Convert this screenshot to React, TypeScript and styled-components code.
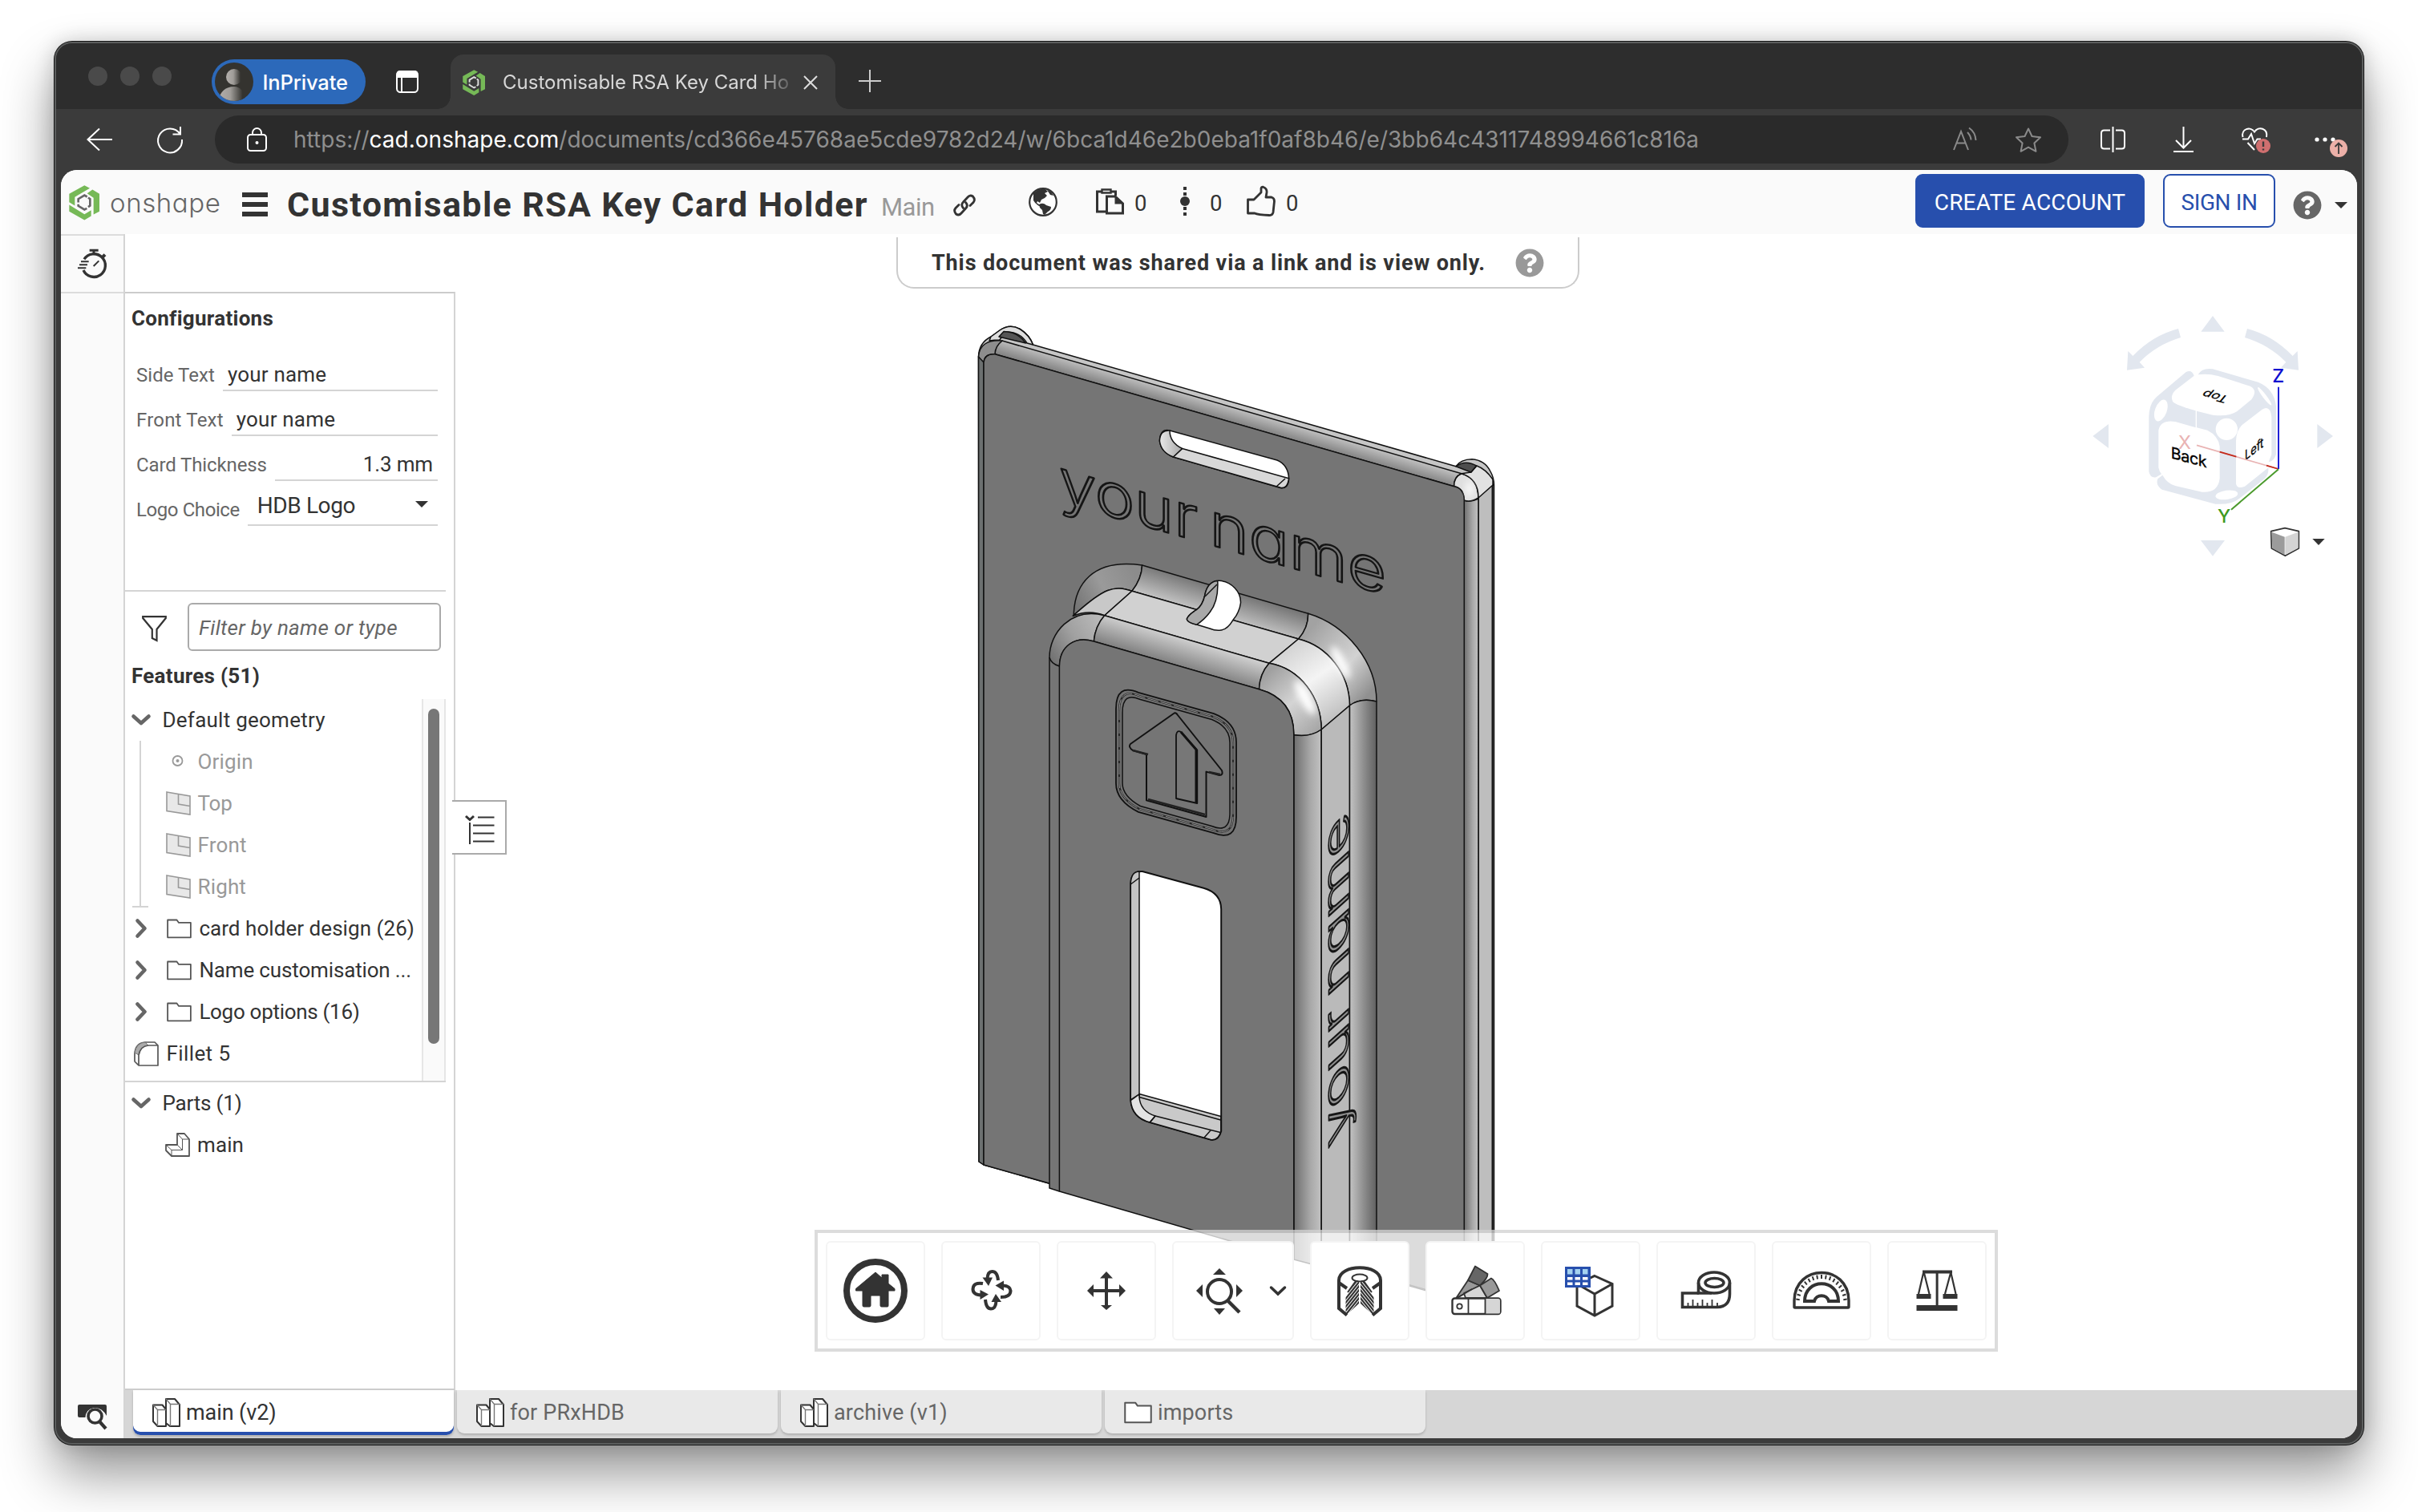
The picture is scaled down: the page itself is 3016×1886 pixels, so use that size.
import React from 'react';
import styled, { createGlobalStyle, css } from 'styled-components';
import { FaQuestionCircle } from 'react-icons/fa';

const GlobalStyle = createGlobalStyle`
  * { box-sizing: border-box; }
  body { margin: 0; background: #fff; overflow: hidden; }
  svg { display: block; overflow: visible; }
`;

const ui = '"Inter", "Liberation Sans", sans-serif';
const site = 'Roboto, "Open Sans", sans-serif';
const ink = '#333';
const line = '#d4d4d4';
const blue = '#274fad';

/* ---------- browser frame ---------- */

const Desktop = styled.div`
  width: 3016px;
  height: 1886px;
  padding: 52px 68px;
  background: #fff;
`;

const Window = styled.div`
  display: flex;
  flex-direction: column;
  width: 2880px;
  height: 1750px;
  border: 2px solid #5b5d5d;
  border-radius: 22px;
  background: #3b3b3b;
  box-shadow: 0 0 0 1px #161616, 0 36px 66px rgba(0, 0, 0, 0.42), 0 0 26px rgba(0, 0, 0, 0.18);
`;

const TabStrip = styled.div`
  display: flex;
  align-items: flex-start;
  flex: 0 0 82px;
  padding-left: 40px;
  border-radius: 20px 20px 0 0;
  background: #2d2d2d;
`;

const Lights = styled.div`
  display: flex;
  gap: 16px;
  margin-top: 29px;
`;

const Light = styled.span`
  width: 24px;
  height: 24px;
  border-radius: 50%;
  background: #4a4a4a;
`;

const Profile = styled.div`
  display: flex;
  align-items: center;
  gap: 11.5px;
  width: 192px;
  height: 56px;
  margin: 20px 0 0 50px;
  padding-left: 4px;
  border-radius: 28px;
  background: #2c69ba;
  color: #fff;
  font: 500 25.5px ${ui};
  letter-spacing: -0.15px;
`;

const StripIcon = styled.div<{ $top: number; $left: number }>`
  margin: ${p => p.$top}px 0 0 ${p => p.$left}px;
`;

const BrowserTab = styled.div`
  position: relative;
  display: flex;
  align-items: center;
  width: 480px;
  height: 68px;
  margin: 14px 0 0 40px;
  padding: 2px 22px 0 15px;
  border-radius: 16px 16px 0 0;
  background: #3b3b3b;
  &::before, &::after {
    content: '';
    position: absolute;
    bottom: 0;
    width: 16px;
    height: 16px;
  }
  &::before {
    left: -16px;
    background: radial-gradient(circle at 0 0, transparent 15.5px, #3b3b3b 16px);
  }
  &::after {
    right: -16px;
    background: radial-gradient(circle at 100% 0, transparent 15.5px, #3b3b3b 16px);
  }
`;

const TabTitle = styled.span`
  flex: none;
  margin: 0 auto 0 22px;
  white-space: nowrap;
  font: 400 24px/40px ${ui};
  color: #d8d8d8;
  -webkit-mask-image: linear-gradient(90deg, #000 88%, rgba(0, 0, 0, 0.25) 100%);
  mask-image: linear-gradient(90deg, #000 88%, rgba(0, 0, 0, 0.25) 100%);
`;

const Toolbar = styled.div`
  display: flex;
  align-items: center;
  flex: 0 0 76px;
  padding-left: 38px;
`;

const AddressBar = styled.div`
  display: flex;
  align-items: center;
  width: 2312px;
  height: 60px;
  margin: 0 40px;
  padding: 0 34px 0 40px;
  border-radius: 30px;
  background: #2a2a2a;
`;

const Url = styled.span`
  flex: 1;
  margin-left: 33px;
  white-space: nowrap;
  font: 400 28px/60px ${ui};
  letter-spacing: 0.02px;
  color: #8f8f8f;
`;

const Host = styled.span`
  color: #fff;
`;

const Gap = styled.span<{ $w: number }>`
  flex: 0 0 ${p => p.$w}px;
`;

/* ---------- page ---------- */

const Page = styled.div`
  display: flex;
  flex-direction: column;
  flex: 1;
  min-height: 0;
  margin: 0 6px 6px;
  border-radius: 20px;
  overflow: hidden;
  background: #fff;
  font-family: ${site};
  color: ${ink};
`;

const Header = styled.header`
  display: flex;
  align-items: flex-start;
  flex: 0 0 80px;
  padding: 0 12px 0 10px;
  background: #fafafa;
`;

const Slot = styled.div<{ $ml?: number; $mt: number; $w?: number }>`
  flex: none;
  margin: ${p => p.$mt}px 0 0 ${p => p.$ml ?? 0}px;
  ${p => p.$w && css`width: ${p.$w}px;`}
`;

const Wordmark = styled.span`
  font: 300 33px/60px ${ui};
  font-feature-settings: 'cv11';
  letter-spacing: 0.6px;
  color: #666;
`;

const DocTitle = styled.h1`
  margin: 0;
  white-space: nowrap;
  font: 700 43px/60px ${site};
  letter-spacing: 1.34px;
`;

const Branch = styled.span`
  font: 400 31px/60px ${site};
  letter-spacing: -0.5px;
  color: #999;
`;

const Count = styled.span`
  font: 400 27.5px/60px ${site};
`;

const HeaderButton = styled.button<{ $primary?: boolean; $w: number }>`
  width: ${p => p.$w}px;
  height: 67px;
  padding: 3px 1px 0 0;
  border: 2px solid ${blue};
  border-radius: 9px;
  background: ${p => (p.$primary ? blue : '#fff')};
  color: ${p => (p.$primary ? '#fff' : blue)};
  font: 400 28px ${site};
  letter-spacing: ${p => (p.$primary ? 0.2 : -0.4)}px;
`;

const Body = styled.div`
  display: flex;
  flex: 1;
  min-height: 0;
`;

const Rail = styled.aside`
  display: flex;
  flex-direction: column;
  justify-content: space-between;
  flex: 0 0 80px;
  border-right: 2px solid ${line};
  background: #fafafa;
`;

const RailCell = styled.div`
  height: 74px;
  padding: 17px 0 0 21px;
  border: solid #dcdcdc;
  border-width: 2px 0;
`;

const RailFoot = styled.div`
  padding: 0 0 11px 21px;
`;

const Main = styled.main`
  display: flex;
  flex-direction: column;
  flex: 1;
`;

const Workspace = styled.div`
  display: flex;
  flex: 1;
`;

const Panel = styled.section`
  position: relative;
  display: flex;
  flex-direction: column;
  flex: 0 0 412px;
  margin-top: 72px;
  border: 2px solid #ccc;
  border-left: 0;
  border-right-color: ${line};
`;

const PanelHeading = styled.h2<{ $h: number }>`
  margin: 0;
  padding-left: 8px;
  font: 700 26px/${p => p.$h}px ${site};
  letter-spacing: 0.28px;
`;

const ConfigRow = styled.label`
  display: flex;
  align-items: flex-end;
  gap: 10px;
  height: 56px;
  padding: 0 20px 0 14px;
`;

const ConfigName = styled.span<{ $track: number }>`
  font: 400 24px/40px ${site};
  letter-spacing: ${p => p.$track}px;
  color: #666;
`;

const ConfigValue = styled.span<{ $right?: boolean }>`
  flex: 1;
  padding: 0 6px;
  border-bottom: 2px solid ${line};
  font: 400 26px/38px ${site};
  letter-spacing: ${p => (p.$right ? -0.15 : 0.2)}px;
  text-align: ${p => (p.$right ? 'right' : 'left')};
`;

const ConfigSelect = styled(ConfigValue)`
  display: flex;
  justify-content: space-between;
  padding: 0 12px;
  font-size: 28px;
  line-height: 47px;
  letter-spacing: -0.4px;
`;

const Divider = styled.div`
  flex: 0 0 2px;
  width: 400px;
  background: ${line};
`;

const FilterRow = styled.div`
  display: flex;
  align-items: center;
  height: 60px;
  margin: 14px 0 2px;
  padding-left: 21px;
`;

const FunnelBox = styled.div`
  padding: 4px 0 0;
`;

const FilterInput = styled.div`
  width: 316px;
  height: 60px;
  margin-left: 26px;
  padding: 0 12px;
  border: 2px solid #aaa;
  border-radius: 6px;
  font: italic 400 26px/59px ${site};
  letter-spacing: 0.28px;
  color: #666;
`;

const TreeArea = styled.div`
  display: flex;
  height: 476px;
`;

const Tree = styled.div`
  flex: 0 0 370px;
`;

const TreeRow = styled.div<{ $pad: number; $gap: number; $dim?: boolean; $track?: number }>`
  display: flex;
  align-items: center;
  gap: ${p => p.$gap}px;
  height: 52px;
  padding-left: ${p => p.$pad}px;
  white-space: nowrap;
  font: 400 26px/52px ${site};
  letter-spacing: ${p => p.$track ?? 0.1}px;
  color: ${p => (p.$dim ? '#999' : ink)};
`;

const Branching = styled.div`
  position: relative;
  margin-left: 18px;
  border-left: 2px solid ${line};
  &::after {
    content: '';
    position: absolute;
    left: -11px;
    bottom: 0;
    width: 20px;
    height: 2px;
    background: ${line};
  }
`;

const ScrollTrack = styled.div`
  flex: 0 0 30px;
  padding: 12px 6px 0;
  border: solid #e6e6e6;
  border-width: 0 2px;
  background: #fafafa;
`;

const ScrollThumb = styled.div`
  width: 14px;
  height: 418px;
  border-radius: 7px;
  background: #777;
`;

const PanelHandle = styled.button`
  position: absolute;
  left: 408px;
  top: 632px;
  width: 68px;
  height: 68px;
  padding: 5px 0 0 16px;
  border: 2px solid #aaa;
  border-left: 0;
  background: #fff;
`;

const Viewport = styled.section`
  position: relative;
  flex: 1;
`;

const Banner = styled.div`
  position: absolute;
  left: 550px;
  top: 4px;
  display: flex;
  align-items: center;
  gap: 37px;
  width: 852px;
  height: 64px;
  padding: 2px 0 0 42px;
  border: 2px solid #ccc;
  border-top: 0;
  border-radius: 0 0 22px 22px;
  background: #fff;
  font: 700 27px ${site};
  letter-spacing: 0.88px;
  white-space: nowrap;
`;

const ModelLayer = styled.div`
  position: absolute;
  left: 632px;
  top: 98px;
`;

const CubeLayer = styled.div`
  position: absolute;
  left: 2012px;
  top: 78px;
`;

const ViewBar = styled.div`
  position: absolute;
  left: 448px;
  top: 1242px;
  display: flex;
  gap: 20px;
  padding: 10px;
  border: 4px solid rgba(0, 0, 0, 0.137);
  background: rgba(255, 255, 255, 0.75);
`;

const ViewButton = styled.button<{ $wide?: boolean }>`
  width: ${p => (p.$wide ? 152 : 124)}px;
  height: 124px;
  padding: 0;
  border: 2px solid #f4f4f4;
  border-radius: 6px;
  background: #fff;
`;

const TabBar = styled.nav`
  display: flex;
  align-items: flex-start;
  gap: 4px;
  flex: 0 0 60px;
  padding-left: 10px;
  background: #d6d6d6;
`;

const DocTab = styled.div<{ $active?: boolean }>`
  display: flex;
  align-items: center;
  gap: 7px;
  width: 400px;
  height: ${p => (p.$active ? 56 : 54)}px;
  padding: ${p => (p.$active ? 0 : 2)}px 0 0 24px;
  border-radius: 0 0 9px 9px;
  background: ${p => (p.$active ? '#fff' : '#e9e9e9')};
  box-shadow: ${p => (p.$active ? `inset 0 -4px 0 ${blue}, 0 2px 3px rgba(0,0,0,.2)` : '0 2px 3px rgba(0,0,0,.18)')};
  font: 400 27px/54px ${site};
  letter-spacing: ${p => (p.$active ? -0.1 : 0.15)}px;
  color: ${p => (p.$active ? ink : '#666')};
`;

/* ---------- small drawings ---------- */

const Logo = ({ w, inner }: { w: number; inner: string }) => (
  <svg width={w} height={w * 1.15} viewBox="2 513 114 130">
    <g fill="#76b957">
      <path d="M3 545 60 513 80 524 24 557V589L3 576Z" />
      <path d="M90 529 116 545V611L94 622V560L70 543Z" />
      <path d="M3 586 60 621 85 606V628L60 643 3 611Z" />
    </g>
    <g fill="none" stroke={inner} strokeWidth="8">
      <path d="M70 556 60 550 37 564V577" />
      <path d="M74 559 81 564V589L74 594" />
      <path d="M37 584V590L60 604 69 599" />
    </g>
  </svg>
);

const Chevron = ({ down }: { down?: boolean }) => (
  <svg width="24" height="24" viewBox="0 0 24 24" fill="none" stroke="#666" strokeWidth="4.6" strokeLinecap="round" strokeLinejoin="round">
    {down ? <path d="M2.5 7.5 12 16 21.5 7.5" /> : <path d="M7.5 2.5 16.5 12 7.5 21.5" />}
  </svg>
);

const Folder = ({ w = 31 }: { w?: number }) => (
  <svg width={w} height={w * 0.8} viewBox="0 0 31 25" fill="#fff" stroke="#555" strokeWidth="1.8" strokeLinejoin="round">
    <path d="M1 23.5V1.5H12.5L15 5H30V23.5Z" />
  </svg>
);

const Plane = () => (
  <svg width="31" height="30" viewBox="0 0 31 30" fill="#e8e8e8" stroke="#999" strokeWidth="1.6">
    <path d="M1 1 30 6V29L1 24.5Z" />
    <path d="M15.5 3.5V16L30 18.5" fill="none" />
  </svg>
);

const Origin = () => (
  <svg width="31" height="30" viewBox="0 0 31 30" fill="none" stroke="#999" strokeWidth="1.8">
    <circle cx="14.5" cy="14" r="6" />
    <circle cx="14.5" cy="14" r="2" fill="#999" stroke="none" />
  </svg>
);

const FilletIcon = () => (
  <svg width="31" height="31" viewBox="0 0 31 31" fill="#fff" stroke="#555" strokeWidth="1.7" strokeLinejoin="round">
    <path d="M6 30 1 25V15Q2 2 14 1H26L30 5V30Z" />
    <path d="M1 14Q3 2 14 1L18 5Q8 6 6 17Z" fill="#aaa" stroke="#777" strokeWidth="1" />
    <path d="M6 30V17Q8 6 18 5H30" fill="none" />
  </svg>
);

const PartIcon = () => (
  <svg width="31" height="30" viewBox="0 0 31 30" fill="#fff" stroke="#555" strokeWidth="1.8" strokeLinejoin="round">
    <path d="M1 15H15V1H24L30 8V29H8L1 22Z" />
    <path d="M1 15 8 21.5H21.5V8H30M15 1 21.5 8M15 15 21.5 21.5M8 21.5V29" fill="none" strokeWidth="1" />
  </svg>
);

const Studio = () => (
  <svg width="35" height="36" viewBox="0 0 35 36" fill="#fff" stroke="#333" strokeWidth="2" strokeLinejoin="round">
    <path d="M1 8.5H12.5L17 14V35H6.5L1 29Z" />
    <path d="M17 1H28L34 8V35H22L17 31Z" />
    <path d="M1 8.5 6.5 14.5V35M6.5 14.5H17M17 1 22.5 7.5V35M22.5 7.5H34" fill="none" stroke="#777" strokeWidth="1.4" />
  </svg>
);

const Caret = ({ w = 16 }: { w?: number }) => (
  <svg width={w} height={w / 2} viewBox="0 0 16 8">
    <path d="M0 0H16L8 8Z" fill={ink} />
  </svg>
);

const Avatar = () => (
  <svg width="48" height="48" viewBox="0 0 48 48">
    <defs>
      <linearGradient id="person" x1="0" x2="1">
        <stop offset="0" stopColor="#b3afab" />
        <stop offset="0.45" stopColor="#a09d99" />
        <stop offset="0.9" stopColor="#34332f" />
      </linearGradient>
      <clipPath id="disc"><circle cx="24" cy="24" r="24" /></clipPath>
    </defs>
    <g clipPath="url(#disc)">
      <rect width="48" height="48" fill="#34332f" />
      <circle cx="24" cy="18" r="10" fill="url(#person)" />
      <path d="M4 48Q8 30 24 30Q36 30 38 48Z" fill="url(#person)" />
    </g>
  </svg>
);

/* ---------- view bar icons ---------- */

const HomeIcon = () => (
  <>
    <circle cx="60" cy="60" r="36" fill="none" stroke={ink} strokeWidth="8" />
    <path d="M60 37 35.5 57.5V60H44V78.5Q44 80 45.5 80H52.5Q54 80 54 78.5V67Q54 66 55 66H65Q66 66 66 67V78.5Q66 80 67.5 80H75Q76 80 76 78.5V60H84V57.5L76 51V40H68V44Z" fill={ink} stroke={ink} strokeLinejoin="round" />
  </>
);

const OrbitIcon = () => (
  <g fill="none" stroke={ink} strokeWidth="4">
    <path d="M69 47Q68 36 61.5 36Q56 36 55.5 45" />
    <path d="M50 51Q38 49 37.5 58Q37.5 65 48 65.5" />
    <path d="M53 71Q54 82.5 60 82.5Q66 82.5 66.5 73" />
    <path d="M72 68Q84.5 68 84.5 60Q84 54 75 53.5" />
    <g fill={ink} stroke="none">
      <path d="M49.5 43.5H62L57 54Z" />
      <path d="M46.5 59V71L57 64.5Z" />
      <path d="M60.5 74H73L66 64Z" />
      <path d="M76 47.5V60L65.5 53.5Z" />
    </g>
  </g>
);

const PanIcon = () => (
  <g fill={ink}>
    <path d="M58 42H62V78H58Z" />
    <path d="M42 58H78V62H42Z" />
    <path d="M60 36 68 44.5H52ZM60 84 53 78H67ZM36 60 44 52V68ZM84 60 76 52V68Z" />
  </g>
);

const FitIcon = () => (
  <g fill={ink}>
    <circle cx="57" cy="61" r="15" fill="none" stroke={ink} strokeWidth="4" />
    <path d="M68 73 82 87" stroke={ink} strokeWidth="4.5" />
    <path d="M57 32 65 40H49ZM57 90 50 82H64ZM28 60 36 52V68ZM86 60 78 52V68Z" />
    <path d="M121.5 56 130 64 138.5 56" fill="none" stroke={ink} strokeWidth="3.5" strokeLinecap="round" />
  </g>
);

const SectionIcon = () => (
  <g fill="none" stroke={ink} strokeWidth="4">
    <defs>
      <clipPath id="threads">
        <path d="M56 47 42.5 68V91L59 76V47ZM64 47 77.5 68V91L61 76V47Z" />
      </clipPath>
    </defs>
    <path d="M44 90.5 34 82V47C34 26 86 26 86 47V82L76 90.5" />
    <path d="M34 50 44 57M86 50 76 57" />
    <ellipse cx="60" cy="44" rx="9.5" ry="4.5" strokeWidth="2" />
    <path d="M55 48 45 62M65 48 75 62" strokeWidth="2" />
    <g clipPath="url(#threads)" strokeWidth="2.2">
      {[0, 1, 2, 3, 4, 5, 6, 7, 8, 9].map(i => (
        <path key={i} d={`M40 ${63 + i * 5} 60 ${38 + i * 5} 80 ${63 + i * 5}`} />
      ))}
    </g>
  </g>
);

const SwatchIcon = () => (
  <g stroke={ink} strokeWidth="1.8" strokeLinejoin="round">
    <path d="M51 47 66 53.5 36 69.5Z" fill="#999" />
    <path d="M60 29.5 75.5 39Q76 44 66 53.5L51 47Z" fill="#666" />
    <path d="M66 53.5 75 69H48L46 63Z" fill="#d6d6d6" />
    <path d="M66 53.5 80 44.5Q84 46 90 60L75 69Z" fill="#999" />
    <path d="M34 71 56 58" fill="none" />
    <rect x="31.5" y="69.5" width="60" height="19.5" rx="3" fill="#fff" strokeWidth="2.4" />
    <path d="M72.5 70H89Q91 70 91 72V87Q91 88.5 89 88.5H72.5Z" fill="#d6d6d6" stroke="none" />
    <path d="M51.5 70V89M72.5 70V89" />
    <circle cx="40.5" cy="79.5" r="3.2" fill="none" />
  </g>
);

const GridCubeIcon = () => (
  <>
    <path d="M65 41.5 87 51.5V79L65 91 43 79V52ZM43 51.5 65 64 87 51.5M65 64V91" fill="#fff" stroke={ink} strokeWidth="3" />
    <rect x="28" y="30" width="32" height="26" fill={blue} />
    {[31, 40.5, 50].map(x => (
      <g key={x}>
        <rect x={x} y="33" width="6.5" height="6.5" fill="#a4d2f0" />
        <rect x={x} y="43" width="6.5" height="3.5" fill="#fff" />
        <rect x={x} y="49.5" width="6.5" height="3.5" fill="#fff" />
      </g>
    ))}
  </>
);

const TapeIcon = () => (
  <g fill="none" stroke={ink} strokeWidth="3.6">
    <path d="M51 63H30.5V80.5H74Q89.5 80 89.5 64V50" />
    <ellipse cx="70" cy="50" rx="19.5" ry="13" />
    <ellipse cx="70.5" cy="50" rx="11.5" ry="5.5" />
    <path d="M50.5 50V63H67" />
    {[37.5, 43.5, 49.5, 55.5, 61.5, 67.5, 74].map((x, i) => (
      <path key={x} d={`M${x} 80V${i % 2 ? 71 : 75}`} strokeWidth="1.8" />
    ))}
  </g>
);

const ProtractorIcon = () => (
  <g fill="none" stroke={ink}>
    <path d="M26 80V72C27 26 93 26 94 72V80Q94 81 93 81H27Q26 81 26 80Z" strokeWidth="3.4" />
    <path d="M39 73C39 44 81 44 81 73H69C67 64 53 64 51 73Z" strokeWidth="4" />
    {Array.from({ length: 17 }, (_, i) => {
      const a = Math.PI * (0.04 + (i * 0.92) / 16);
      const c = Math.cos(a);
      const s = Math.sin(a);
      return <path key={i} d={`M${60 - 32 * c} ${75 - 35 * s}L${60 - 27.5 * c} ${75 - 30 * s}`} strokeWidth="2" />;
    })}
  </g>
);

const ScaleIcon = () => (
  <g fill={ink}>
    <path d="M42 34.5H79V38.5H42Z" />
    <path d="M58.6 37H61.6V79H58.6Z" />
    <path d="M34.5 78H85.5V85H34.5ZM34.5 64H52.5V70H34.5ZM67.5 64H85.5V70H67.5Z" />
    <path d="M43 38 37 64M44 38 50.5 64M77 38 70 64M77.5 38 83.5 64" stroke={ink} strokeWidth="2.2" />
  </g>
);

const viewTools = [HomeIcon, OrbitIcon, PanIcon, FitIcon, SectionIcon, SwatchIcon, GridCubeIcon, TapeIcon, ProtractorIcon, ScaleIcon];

/* ---------- view cube ---------- */

const ViewCube = () => (
  <svg width="360" height="340" viewBox="0 0 1080 1020">
    <g fill="#e2e7ef">
      <path d="M540 72 584 131H496ZM540 971 585 912H495ZM91 522 150 477V567ZM990 522 931 477V567Z" />
      <path d="M411 120 420 153Q330 180 266 245L285 266 219 275 223 204 241 222Q315 145 411 120Z" />
      <path d="M669 120 660 153Q750 180 814 245L795 266 861 275 857 204 839 222Q765 145 669 120Z" />
      <path d="M440 282Q462 272 470 296L400 350Q380 370 390 392Q400 405 476 427V490L400 468Q345 460 337 500V640Q340 655 348 664L328 676Q306 680 301 655V450Q302 400 330 375Z" />
      <path d="M485 292Q500 265 540 271L710 320Q770 345 777 410V590Q770 615 749 619L760 590V450Q755 405 725 422L650 480Q628 500 627 540V700Q630 722 660 710L748 640Q750 665 735 680L640 755Q610 780 550 776L350 722Q325 705 334 682L352 668Q370 700 400 708L500 731Q560 735 566 680V560Q560 520 520 500L480 490V428L540 443Q600 450 630 430L685 385Q710 350 680 335L560 297Q520 286 485 292Z" />
    </g>
    <g fill="#fff">
      <ellipse cx="346" cy="426" rx="22" ry="42" transform="rotate(20 346 426)" />
      <circle cx="592" cy="496" r="41" />
      <ellipse cx="592" cy="742" rx="42" ry="17" transform="rotate(-8 592 742)" />
      <ellipse cx="734" cy="373" rx="7" ry="42" transform="rotate(-37 734 373)" />
    </g>
    <g fill="#000" stroke="#000" strokeWidth="1" fontFamily="Inter, sans-serif">
      <text transform="matrix(1 .27 0 1 383 604)" fontSize="59" letterSpacing="-1">Back</text>
      <text transform="matrix(.74 -.56 0 1 660 614)" fontSize="52">Left</text>
      <text transform="matrix(-.92 -.24 .5 -.6 604 374)" fontSize="56">Top</text>
    </g>
    <g strokeWidth="5" fill="none">
      <path d="M480 556 786 645" stroke="#e9b3b3" />
      <path d="M566 581 628 599M741 632 786 645" stroke="#c22a1c" />
      <path d="M786 338V645" stroke="#2020d8" strokeWidth="6" />
      <path d="M786 646 609 797" stroke="#4a9a2c" strokeWidth="6" />
    </g>
    <g fontFamily="Inter, sans-serif" fontSize="70" textAnchor="middle" fontWeight="500">
      <text x="785" y="321" fill="#0d0dd0">Z</text>
      <text x="582" y="846" fill="#3f9a1f">Y</text>
      <text x="435" y="569" fill="#e9b3b3" fontWeight="400">X</text>
    </g>
    <g strokeLinejoin="round">
      <path d="M810 866 862 878V942L811 970 760 942 758 878Z" fill="#fff" stroke={ink} strokeWidth="5" />
      <path d="M761 881 809 899V966L763 941Z" fill="#9b9b9b" />
      <path d="M859 881 811 899V966L859 941Z" fill="#d4d4d4" />
      <path d="M913 906H959L936 930Z" fill={ink} />
    </g>
  </svg>
);

/* ---------- card holder model ---------- */

const badge = (d: number) => {
  const l = 1392 + d;
  const r = 1542 - d;
  const k = 0.28;
  const y = (x: number, base: number) => base + (x - 1392) * k;
  const t = 856 + d;
  const b = 1005 - d;
  const q = 28 - d * 0.7;
  return `M${l} ${y(l, t) + q}Q${l} ${y(l, t) - 4} ${l + q} ${y(l + q, t)}L${r - q} ${y(r - q, t)}Q${r} ${y(r, t) + 3} ${r} ${y(r, t) + q}L${r} ${y(r, b) - q}Q${r} ${y(r, b) + 3} ${r - q} ${y(r - q, b)}L${l + q} ${y(l + q, b)}Q${l} ${y(l, b) - 6} ${l} ${y(l, b) - q}Z`;
};

const engraved = {
  fontFamily: 'Inter, sans-serif',
  fontWeight: 300,
  stroke: '#151515',
  strokeLinejoin: 'round' as const,
  lengthAdjust: 'spacingAndGlyphs' as const,
};

const Model = () => (
  <svg width="700" height="1254" viewBox="1200 390 700 1254">
    <defs>
      <linearGradient id="topBand" gradientUnits="userSpaceOnUse" x1="1500" y1="492" x2="1493" y2="516">
        <stop offset="0" stopColor="#cfcfcf" />
        <stop offset="1" stopColor="#7c7c7c" />
      </linearGradient>
      <linearGradient id="edgeBand" x1="0" x2="1">
        <stop offset="0" stopColor="#6e6e6e" />
        <stop offset="0.6" stopColor="#a8a8a8" />
        <stop offset="1" stopColor="#c2c2c2" />
      </linearGradient>
      <linearGradient id="edgeBandFlip" x1="1" x2="0">
        <stop offset="0" stopColor="#606060" />
        <stop offset="0.5" stopColor="#909090" />
        <stop offset="1" stopColor="#c4c4c4" />
      </linearGradient>
      <linearGradient id="blend" gradientUnits="userSpaceOnUse" x1="1530" y1="735" x2="1519" y2="771">
        <stop offset="0" stopColor="#757575" />
        <stop offset="1" stopColor="#c6c6c6" />
      </linearGradient>
      <linearGradient id="lip" gradientUnits="userSpaceOnUse" x1="1482" y1="799" x2="1472" y2="832">
        <stop offset="0" stopColor="#cdcdcd" />
        <stop offset="1" stopColor="#808080" />
      </linearGradient>
      <linearGradient id="cornerOuter" gradientUnits="userSpaceOnUse" x1="1630" y1="790" x2="1712" y2="860">
        <stop offset="0" stopColor="#a2a2a2" />
        <stop offset="0.35" stopColor="#c0c0c0" />
        <stop offset="0.6" stopColor="#d2d2d2" />
        <stop offset="1" stopColor="#909090" />
      </linearGradient>
      <linearGradient id="cornerMid" gradientUnits="userSpaceOnUse" x1="1600" y1="800" x2="1668" y2="900">
        <stop offset="0" stopColor="#cdcdcd" />
        <stop offset="0.5" stopColor="#f4f4f4" />
        <stop offset="1" stopColor="#bcbcbc" />
      </linearGradient>
      <linearGradient id="cornerLip" gradientUnits="userSpaceOnUse" x1="1575" y1="845" x2="1640" y2="915">
        <stop offset="0" stopColor="#a0a0a0" />
        <stop offset="0.5" stopColor="#d4d4d4" />
        <stop offset="1" stopColor="#a6a6a6" />
      </linearGradient>
      <linearGradient id="leftOuter" gradientUnits="userSpaceOnUse" x1="1345" y1="765" x2="1420" y2="725">
        <stop offset="0" stopColor="#747474" />
        <stop offset="0.5" stopColor="#9a9a9a" />
        <stop offset="1" stopColor="#8c8c8c" />
      </linearGradient>
      <linearGradient id="leftLip" gradientUnits="userSpaceOnUse" x1="1312" y1="820" x2="1375" y2="780">
        <stop offset="0" stopColor="#747474" />
        <stop offset="0.5" stopColor="#a0a0a0" />
        <stop offset="1" stopColor="#b8b8b8" />
      </linearGradient>
      <linearGradient id="slotEnd" x1="0" x2="1">
        <stop offset="0" stopColor="#e8e8e8" />
        <stop offset="1" stopColor="#a8a8a8" />
      </linearGradient>
      <filter id="soft" x="-60%" y="-60%" width="220%" height="220%">
        <feGaussianBlur stdDeviation="4" />
      </filter>
    </defs>

    <g stroke="#111" strokeWidth="1.5" strokeLinejoin="round">
      {/* plate */}
      <path fill="#c6c6c6" d="M1220.5 445C1221 428 1232 422 1236 420L1247 412Q1260 403 1273 411Q1284 418 1288.5 430L1816 581.7Q1822 573 1836 572.8Q1852 574 1859 588Q1863.5 596 1863.5 605V1634L1227 1453 1221 1449Z" />
      <path fill="#ddd" d="M1236 420 1247 412Q1260 403 1273 411Q1284 418 1288.5 430L1281 428Q1272 413 1253 414L1247 424Q1240 424 1234 425Z" />
      <path fill="#555" d="M1246 420 1252 413.5Q1270 414 1279.5 428L1250 421Z" />
      <path fill="url(#topBand)" d="M1250 425 1823 590.7Q1813 595 1813.8 606.7L1241 441.7Q1241 432 1250 425Z" />
      <path fill="#8d8d8d" d="M1250 425Q1222 423 1220.5 445 1221 449 1227 452 1228 441 1241 441.7 1241 432 1250 425Z" />
      <path fill="#bebebe" d="M1844 620 1863 604V1632L1844 1627Z" />
      <path fill="url(#edgeBand)" d="M1826 624Q1834 627 1844 622V1627L1826 1622Z" />
      <path fill="#e0e0e0" d="M1823 590.7Q1844 597 1844 621 1834 627 1826.3 624 1826 609 1813.8 606.7 1813 595 1823 590.7Z" />
      <path fill="#e2e2e2" d="M1823 590.7 1835 589 1842 581Q1853 585 1862 598V605L1844 621Q1844 597 1823 590.7Z" />
      <path fill="#4e4e4e" d="M1816 581.7Q1828 573 1841.5 581L1834.8 589Z" />
      <path fill="#6c7070" d="M1220.5 445 1227 452V1453L1221 1449Z" />
      <path fill="#757575" d="M1227 452Q1228 441 1241 441.7L1813.8 606.7Q1826 609 1826.3 624V1622L1227 1453Z" />
      <path d="M1861.3 606V1632" />
      <ellipse cx="1833" cy="610" rx="4" ry="10" fill="#fff" stroke="none" filter="url(#soft)" />

      {/* lanyard slot */}
      <path fill="#fff" d="M1446.4 550Q1447 534 1459 537L1592.9 574Q1607 580 1607.6 597 1607 610 1597 608.5L1463.4 570Q1448 564 1446.4 550Z" />
      <path fill="#d8d8d8" d="M1474.6 559.5 1607.6 596.7Q1606 610 1597.3 608.3L1463.4 570Z" />
      <path fill="url(#slotEnd)" d="M1459 537Q1447 536 1446.4 550 1448 564 1463.4 570L1474.6 559.5Q1459 552 1459 537Z" />
      <path d="M1592 607 1603 597" fill="none" />

      <text {...engraved} fill="#757575" transform="matrix(1 .286 0 1 1321 625.5)" fontSize="76" strokeWidth="2.4" textLength="408" style={{ fontFeatureSettings: "'cv11'", wordSpacing: '-8px' }}>your name</text>

      {/* raised body */}
      <path fill="#757575" stroke="none" d="M1309 820V1482L1322 1486V830Z" />
      <path fill="url(#leftOuter)" d="M1339.3 767C1340 730 1362 696 1424.6 705Q1424 722 1412 737.3C1390 730 1378 732 1338.4 768.3Z" />
      <path fill="url(#blend)" d="M1424.6 705 1631.7 765.3Q1632 783 1619.6 797L1412 737.3Q1424 722 1424.6 705Z" />
      <path fill="url(#cornerOuter)" d="M1631.7 765.3C1680 780 1717 826 1717 875Q1697 870 1683.5 880C1683 840 1656 806 1619.6 797Q1632 783 1631.7 765.3Z" />
      <path fill="#c8c8c8" d="M1338.4 768.3C1378 732 1390 730 1412 737.3L1377.7 767.7Q1358 760 1338.4 768.3Z" />
      <path fill="#d1d1d1" d="M1412 737.3 1619.6 797 1583 827.3 1377.7 767.7Z" />
      <path fill="url(#cornerMid)" d="M1619.6 797C1656 806 1683 840 1683.5 880L1648.2 910C1648 870 1622 834 1583 827.3Z" />
      <path fill="url(#leftLip)" d="M1309 820C1309 790 1335 757 1377.7 767.7Q1366 781 1364.3 800C1340 793 1322 806 1321.4 831Q1311 828 1309 820Z" />
      <path fill="url(#lip)" d="M1377.7 767.7 1583 827.3Q1571 841 1570.5 859.7L1364.3 800Q1366 781 1377.7 767.7Z" />
      <path fill="url(#cornerLip)" d="M1583 827.3C1622 834 1648 870 1648.2 910Q1634 920 1613.8 916.7C1614 885 1597 867 1570.5 859.7Q1571 841 1583 827.3Z" />
      <path fill="url(#edgeBand)" d="M1613.8 916.7Q1634 920 1648.2 910V1580L1613.8 1571Z" />
      <path fill="#bababa" d="M1648.2 910 1683.5 880V1590L1648.2 1580Z" />
      <path fill="url(#edgeBandFlip)" d="M1683.5 880Q1697 870 1717 875V1596L1683.5 1590Z" />
      <g fill="#fff" stroke="none" filter="url(#soft)">
        <ellipse cx="1672" cy="826" rx="6" ry="22" transform="rotate(-28 1672 826)" />
        <ellipse cx="1628" cy="870" rx="7" ry="24" transform="rotate(-28 1628 870)" />
      </g>
      <path fill="#757575" d="M1321.4 831C1322 806 1340 793 1364.3 800L1570.5 859.7C1597 867 1614 885 1613.8 916.7V1571L1321.4 1486Z" />
      <path d="M1309 820V1482L1321.4 1486" fill="none" />

      {/* cord hole */}
      <path fill="#fff" d="M1508 730Q1514 724 1520.5 724.3C1536 725 1548 738 1547.5 752Q1546 764 1538 773.3 1531 785 1523 786 1516 787 1509 784L1490 778.3Q1480 776 1480.4 772 1482 767 1492.4 760.7 1500 755 1502.7 743Q1504 735 1508 730Z" />
      <path fill="#a9a9a9" d="M1508 730Q1514 724 1518.8 725 1520 751 1508 765 1502 773 1492.4 779.3 1480 776 1480.4 772 1482 767 1492.4 760.7 1500 755 1502.7 743 1504 735 1508 730Z" />
      <path d="M1503 744 1518 729" fill="none" />

      {/* house badge */}
      <path d={badge(0)} fill="#737373" strokeWidth="1.8" />
      <path d={badge(4)} fill="none" stroke="#2a2a2a" strokeWidth="2.4" />
      <path d={badge(4)} fill="none" stroke="#8c8c8c" strokeWidth="1" strokeDasharray="14 3" />
      <path d={badge(8)} fill="#757575" />
      <path fill="#757575" strokeWidth="2" d="M1464 890Q1466.5 888 1469 892L1524 961Q1526 967 1521 967L1504.5 962.6V1019L1430 998.4V941L1413 936Q1407 932 1410 928Z" />
      <path fill="none" stroke="#222" strokeWidth="2.5" d="M1432 941 1413 936M1522 966 1508 963M1432 997 1503 1016" />
      <path fill="#777" strokeWidth="1.8" d="M1467 917Q1468 910 1473 913L1493.3 935.5V1002L1467 996Z" />
      <path d="M1473 913 1492 935V1001" stroke="#111" strokeWidth="3" fill="none" />

      {/* window */}
      <path fill="#fff" strokeWidth="2" d="M1410.3 1102Q1411 1086 1425 1087L1501.3 1107.7Q1523 1114 1523.2 1134V1411Q1520 1423 1510 1421.5L1434.4 1400Q1412 1394 1410.3 1372.6Z" />
      <path fill="#c4c4c4" d="M1410.3 1102Q1411 1087 1421 1087V1365L1410.3 1372Z" />
      <path fill="#c9c9c9" d="M1421 1364.5 1522.8 1392.5V1411Q1520 1423 1510 1421.5L1434.4 1400 1421 1380Z" />
      <path fill="#e3e3e3" d="M1421 1365 1410.3 1372.6Q1412 1394 1434.4 1400L1441 1392Q1422 1386 1421 1368Z" />
      <path fill="none" d="M1421 1368.5 1522.5 1397M1441 1392 1522 1412.5M1441 1392 1434 1400M1510 1410 1502 1419M1410.3 1103 1421 1095" />

      <text {...engraved} fill="#8e8e8e" transform="matrix(0 -1 .6 -.54 1682 1412)" fontSize="75" strokeWidth="2.6" textLength="404" style={{ fontFeatureSettings: "'cv11'", wordSpacing: '-6px' }}>your name</text>
    </g>
  </svg>
);

/* ---------- app ---------- */

const geometry = ['Origin', 'Top', 'Front', 'Right'];
const folders: [string, number][] = [['card holder design (26)', 0.05], ['Name customisation ...', -0.15], ['Logo options (16)', -0.3]];

export default function App() {
  return (
    <Desktop>
      <GlobalStyle />
      <Window>
        <TabStrip>
          <Lights><Light /><Light /><Light /></Lights>
          <Profile><Avatar />InPrivate</Profile>
          <StripIcon $top={34} $left={38}>
            <svg width="28" height="28" viewBox="0 0 28 28" fill="none" stroke="#fff" strokeWidth="2">
              <rect x="1" y="1" width="26" height="26" rx="4.5" />
              <path d="M1.5 8V5Q1.5 1 5 1H23Q26.5 1 26.5 5V8Z" fill="#fff" />
              <path d="M7 8V27" />
            </svg>
          </StripIcon>
          <BrowserTab>
            <Logo w={28} inner="#ddd" />
            <TabTitle>Customisable RSA Key Card Ho</TabTitle>
            <svg width="18" height="18" viewBox="0 0 18 18" stroke="#ddd" strokeWidth="2"><path d="M1 1 17 17M17 1 1 17" /></svg>
          </BrowserTab>
          <StripIcon $top={33} $left={29}>
            <svg width="28" height="28" viewBox="0 0 28 28" stroke="#ccc" strokeWidth="2"><path d="M0 14H28M14 0V28" /></svg>
          </StripIcon>
        </TabStrip>

        <Toolbar>
          <svg width="32" height="28" viewBox="0 0 32 28" fill="none" stroke="#fff" strokeWidth="2"><path d="M16 0.5 1.5 14 16 27.5M1.5 14H32" /></svg>
          <Gap $w={55} />
          <svg width="33" height="32" viewBox="0 0 33 32" fill="none" stroke="#fff" strokeWidth="2"><path d="M29.5 9A15 15 0 1 0 32 16M30 0V9.5H20.5" /></svg>
          <AddressBar>
            <svg width="25" height="30" viewBox="0 0 25 30" fill="none" stroke="#fff" strokeWidth="2">
              <rect x="1" y="9" width="23" height="20" rx="3.5" />
              <path d="M7 9V6.5A5.5 5.5 0 0 1 18 6.5V9" />
              <circle cx="12.5" cy="19" r="2" fill="#fff" stroke="none" />
            </svg>
            <Url>https://<Host>cad.onshape.com</Host>/documents/cd366e45768ae5cde9782d24/w/6bca1d46e2b0eba1f0af8b46/e/3bb64c4311748994661c816a</Url>
            <svg width="30" height="30" viewBox="0 0 30 30" fill="none" stroke="#8a8a8a" strokeWidth="2">
              <path d="M1 28 10 5 19 28M4.5 19.5H15.5M18 6Q22 10 22.5 15.5M20 0.5Q28 6 28.5 16" />
            </svg>
            <Gap $w={48} />
            <svg width="32" height="31" viewBox="0 0 32 31" fill="none" stroke="#8a8a8a" strokeWidth="2" strokeLinejoin="round">
              <path d="M16 1.5 20.5 11 31 12.3 23.4 19.5 25.4 29.8 16 24.6 6.6 29.8 8.6 19.5 1 12.3 11.5 11Z" />
            </svg>
          </AddressBar>
          <svg width="31" height="32" viewBox="0 0 31 32" fill="none" stroke="#fff" strokeWidth="2">
            <path d="M15.5 0V32M12 4.5H4.5Q1 4.5 1 8V24Q1 27.5 4.5 27.5H12M19 4.5H26.5Q30 4.5 30 8V24Q30 27.5 26.5 27.5H19" />
          </svg>
          <Gap $w={60} />
          <svg width="25" height="32" viewBox="0 0 25 32" fill="none" stroke="#fff" strokeWidth="2"><path d="M12.5 0V26M3 17 12.5 26.5 22 17M0 31H25" /></svg>
          <Gap $w={60} />
          <svg width="36" height="32" viewBox="0 0 36 32" fill="none" stroke="#fff" strokeWidth="2">
            <path d="M1.5 13C-1 3 11 -1 16 6.5C21 -1 33 2 31 13M1 15.5H8L12 9 16 21 19.5 15.5H24M7.5 20 16 29" />
            <circle cx="27" cy="24" r="9" fill="#d06f6f" stroke="none" />
            <path d="M27 18.5V25M27 27.5V29.5" stroke="#3b3b3b" strokeWidth="2.4" />
          </svg>
          <Gap $w={55} />
          <svg width="44" height="32" viewBox="0 0 44 32">
            <g fill="#fff"><circle cx="3" cy="16" r="2.6" /><circle cx="13" cy="16" r="2.6" /><circle cx="23" cy="16" r="2.6" /></g>
            <circle cx="30" cy="27" r="11" fill="#ecb0a8" />
            <path d="M30 34V21M25.5 25 30 20.5 34.5 25" fill="none" stroke="#3b3b3b" strokeWidth="1.8" />
          </svg>
        </Toolbar>

        <Page>
          <Header>
            <Slot $mt={19}><Logo w={38} inner="#666" /></Slot>
            <Slot $mt={11} $ml={13} $w={165}><Wordmark>onshape</Wordmark></Slot>
            <Slot $mt={28}>
              <svg width="32" height="30" viewBox="0 0 32 30" fill={ink}><path d="M0 0H32V6H0ZM0 12H32V18H0ZM0 24H32V30H0Z" /></svg>
            </Slot>
            <Slot $mt={13} $ml={24} $w={741}><DocTitle>Customisable RSA Key Card Holder</DocTitle></Slot>
            <Slot $mt={17} $w={90}><Branch>Main</Branch></Slot>
            <Slot $mt={30}>
              <svg width="28" height="28" viewBox="0 0 28 28" fill="none" stroke={ink} strokeWidth="2.8" strokeLinecap="round">
                <path d="M12.5 17.5Q9 13.5 12.5 10L18 4Q21 0.5 24.5 3 28 7 25 10.5L21 14.5" />
                <path d="M15.5 10.5Q19 14.5 15.5 18L10 24Q7 27.5 3.5 25 0 21 3 17.5L7 13.5" />
              </svg>
            </Slot>
            <Slot $mt={22} $ml={66}>
              <svg width="36" height="36" viewBox="0 0 36 36">
                <circle cx="18" cy="18" r="16.8" fill="#fff" stroke={ink} strokeWidth="2.2" />
                <path d="M6 7Q12 1 21 2L24 5 20 7 23 10 20 13 16 15 14 19 11 17 10 19 16 23 13 23Q8 20 6 16Z" fill={ink} />
                <path d="M13 21Q18 18 22 22L28 24Q28 28 24 30L20 34 18 33 17 28 14 25Z" fill={ink} />
                <path d="M23 3 28 5 31 10 27 9Z" fill={ink} />
              </svg>
            </Slot>
            <Slot $mt={23} $ml={48}>
              <svg width="35" height="33" viewBox="0 0 35 33" fill="none" stroke={ink} strokeWidth="3">
                <path d="M12 29H1.5V4H7M19 4H24.5V9" />
                <path d="M7.5 1.5H18.5V5.5H7.5Z" strokeWidth="2.4" />
                <path d="M13.5 10H24L33.5 19V31H13.5Z" />
                <path d="M23.5 9V19.5H34Z" fill={ink} stroke="none" />
              </svg>
            </Slot>
            <Slot $mt={12} $ml={13} $w={57}><Count>0</Count></Slot>
            <Slot $mt={21}>
              <svg width="12" height="36" viewBox="0 0 12 36" fill={ink}>
                <path d="M4 0H8V4H4ZM4 7H8V11H4ZM4 25H8V29H4ZM4 32H8V36H4Z" /><circle cx="6" cy="18" r="6" />
              </svg>
            </Slot>
            <Slot $mt={12} $ml={25} $w={46}><Count>0</Count></Slot>
            <Slot $mt={20}>
              <svg width="36" height="38" viewBox="0 0 36 38" fill="none" stroke={ink} strokeWidth="2.8" strokeLinejoin="round">
                <path d="M1.5 17H9L18 8V3Q18.5 1 20.5 1.2 25.5 3 25 8L24 14H31Q34.5 15 34.5 19L33 33Q32 37 28 36.5 14 36 10 34H1.5Z" />
              </svg>
            </Slot>
            <Slot $mt={12} $ml={13}><Count>0</Count></Slot>
            <Gap $w={770} />
            <Slot $mt={5}><HeaderButton $primary $w={286}>CREATE ACCOUNT</HeaderButton></Slot>
            <Slot $mt={5} $ml={23}><HeaderButton $w={140}>SIGN IN</HeaderButton></Slot>
            <Slot $mt={26} $ml={22}><FaQuestionCircle size={36} color="#666" /></Slot>
            <Slot $mt={40} $ml={16}><Caret /></Slot>
          </Header>

          <Body>
            <Rail>
              <RailCell>
                <svg width="36" height="36" viewBox="36 752 108 108" fill="none" stroke={ink} strokeWidth="10">
                  <path d="M60 789A43 43 0 1 1 57 830" />
                  <path d="M80 756H113M96 757V772" strokeWidth="9" />
                  <path d="M128 782 138 772" strokeWidth="12" />
                  <path d="M48 798H77M42 810H72M36 822H67" strokeWidth="6" />
                  <path d="M95 815 115 795" strokeWidth="6" />
                </svg>
              </RailCell>
              <RailFoot>
                <svg width="36" height="31" viewBox="0 0 36 31">
                  <path d="M2 0H34Q36 0 36 2V14Q30 3 20 4 10 6 9.5 16H2Q0 16 0 14V2Q0 0 2 0Z" fill={ink} />
                  <circle cx="21.5" cy="14.5" r="8.5" fill="#fafafa" stroke={ink} strokeWidth="3.6" />
                  <path d="M27 21 35 30" stroke={ink} strokeWidth="4.2" />
                </svg>
              </RailFoot>
            </Rail>

            <Main>
              <Workspace>
                <Panel>
                  <PanelHeading $h={62}>Configurations</PanelHeading>
                  <Gap $w={4} />
                  <ConfigRow><ConfigName $track={0.05}>Side Text</ConfigName><ConfigValue>your name</ConfigValue></ConfigRow>
                  <ConfigRow><ConfigName $track={0.2}>Front Text</ConfigName><ConfigValue>your name</ConfigValue></ConfigRow>
                  <ConfigRow><ConfigName $track={-0.12}>Card Thickness</ConfigName><ConfigValue $right>1.3 mm</ConfigValue></ConfigRow>
                  <ConfigRow>
                    <ConfigName $track={-0.42}>Logo Choice</ConfigName>
                    <ConfigSelect>HDB Logo<StripIcon $top={18} $left={0}><Caret /></StripIcon></ConfigSelect>
                  </ConfigRow>
                  <Gap $w={80} />
                  <Divider />
                  <FilterRow>
                    <FunnelBox>
                      <svg width="31" height="32" viewBox="0 0 31 32" fill="none" stroke={ink} strokeWidth="2.2">
                        <path d="M1.2 1.2H29.8V3L18.5 17V31L12.8 28V17L1.2 3Z" />
                      </svg>
                    </FunnelBox>
                    <FilterInput>Filter by name or type</FilterInput>
                  </FilterRow>
                  <PanelHeading $h={58}>Features (51)</PanelHeading>
                  <TreeArea>
                    <Tree>
                      <TreeRow $pad={8} $gap={14.5} $track={0.25}><Chevron down />Default geometry</TreeRow>
                      <Branching>
                        {geometry.map(name => (
                          <TreeRow key={name} $pad={31} $gap={8.5} $dim $track={name === 'Top' ? -0.2 : 0.15}>
                            {name === 'Origin' ? <Origin /> : <Plane />}{name}
                          </TreeRow>
                        ))}
                      </Branching>
                      {folders.map(([name, track]) => (
                        <TreeRow key={name} $pad={8} $gap={9.8} $track={track}>
                          <Chevron /><Gap $w={0} /><Folder />{name}
                        </TreeRow>
                      ))}
                      <TreeRow $pad={11} $gap={9.5} $track={0.4}><FilletIcon />Fillet 5</TreeRow>
                    </Tree>
                    <ScrollTrack><ScrollThumb /></ScrollTrack>
                  </TreeArea>
                  <Divider />
                  <TreeRow $pad={8} $gap={14.5} $track={-0.2}><Chevron down />Parts (1)</TreeRow>
                  <TreeRow $pad={50} $gap={9}><PartIcon />main</TreeRow>
                  <PanelHandle>
                    <svg width="37" height="36" viewBox="0 0 37 36" fill="none" stroke={ink} strokeWidth="2">
                      <path d="M16 2.5H36.5M10 12.5H36.5M10 22.5H36.5M10 32.5H36.5M6 9V36" />
                      <path d="M1 1 6 5.5 11 1" strokeWidth="3" />
                    </svg>
                  </PanelHandle>
                </Panel>

                <Viewport>
                  <ModelLayer><Model /></ModelLayer>
                  <Banner>
                    This document was shared via a link and is view only.
                    <FaQuestionCircle size={36} color="#999" />
                  </Banner>
                  <CubeLayer><ViewCube /></CubeLayer>
                  <ViewBar>
                    {viewTools.map((Icon, i) => (
                      <ViewButton key={i} $wide={i === 3}>
                        <svg width={i === 3 ? 148 : 120} height="120" viewBox={`0 0 ${i === 3 ? 148 : 120} 120`}><Icon /></svg>
                      </ViewButton>
                    ))}
                  </ViewBar>
                </Viewport>
              </Workspace>

              <TabBar>
                <DocTab $active><Studio />main (v2)</DocTab>
                <DocTab><Studio />for PRxHDB</DocTab>
                <DocTab><Studio />archive (v1)</DocTab>
                <DocTab><Folder w={35} />imports</DocTab>
              </TabBar>
            </Main>
          </Body>
        </Page>
      </Window>
    </Desktop>
  );
}
